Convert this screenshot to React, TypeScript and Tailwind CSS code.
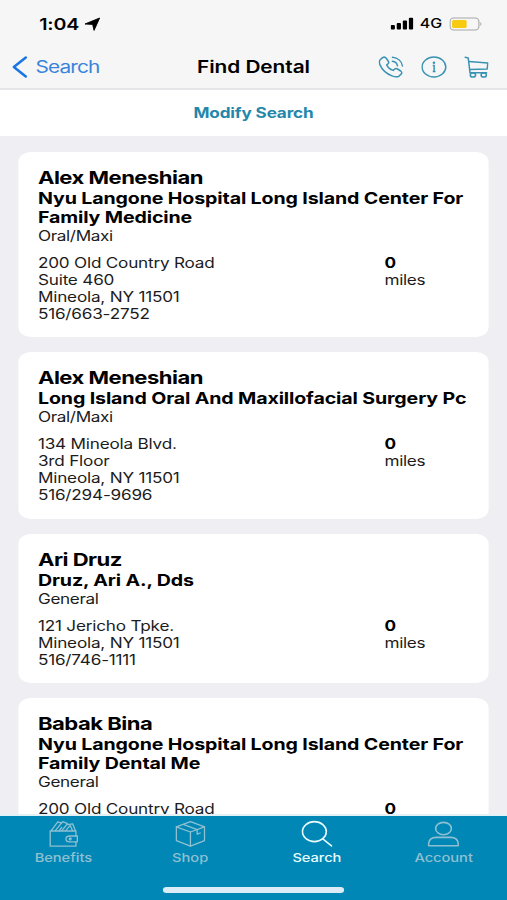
import React from 'react'

type Provider = {
  name: string;
  practice: string[];
  specialty: string;
  address: string[];
}

const providers: Provider[] = [
  {
    name: "Alex Meneshian",
    practice: ["Nyu Langone Hospital Long Island Center For", "Family Medicine"],
    specialty: "Oral/Maxi",
    address: ["200 Old Country Road", "Suite 460", "Mineola, NY 11501", "516/663-2752"],
  },
  {
    name: "Alex Meneshian",
    practice: ["Long Island Oral And Maxillofacial Surgery Pc"],
    specialty: "Oral/Maxi",
    address: ["134 Mineola Blvd.", "3rd Floor", "Mineola, NY 11501", "516/294-9696"],
  },
  {
    name: "Ari Druz",
    practice: ["Druz, Ari A., Dds"],
    specialty: "General",
    address: ["121 Jericho Tpke.", "Mineola, NY 11501", "516/746-1111"],
  },
  {
    name: "Babak Bina",
    practice: ["Nyu Langone Hospital Long Island Center For", "Family Dental Me"],
    specialty: "General",
    address: ["200 Old Country Road"],
  },
];

function StatusBar() {
  return (
    <div className="flex h-[47px] items-center pl-[32px] pr-[20px]">
      <span className="text-[16px] font-semibold tracking-[-0.1px]">1:04</span>
      <svg className="ml-[4px] h-[14px] w-[13px]" viewBox="0 0 16 14" preserveAspectRatio="none">
        <path d="M15.2 1 L0.5 7 L8.2 7.4 L9.6 13.4 Z" fill="#000" stroke="#000" strokeWidth="0.9" strokeLinejoin="round" />
      </svg>
      <svg className="ml-auto h-[13px] w-[19px]" viewBox="0 0 23 13" preserveAspectRatio="none">
        <rect x="0" y="8" width="4.2" height="4.5" rx="1" />
        <rect x="6" y="6" width="4.2" height="6.5" rx="1" />
        <rect x="12" y="3.4" width="4.2" height="9.1" rx="1" />
        <rect x="18" y="0.8" width="4.2" height="11.7" rx="1" />
      </svg>
      <span className="ml-[5px] text-[13px] font-medium">4G</span>
      <svg className="ml-[6px] h-[14px] w-[27px]" viewBox="0 0 33 14" preserveAspectRatio="none">
        <rect x="0.6" y="1" width="28.8" height="12" rx="3.6" fill="none" stroke="#a5a5a5" strokeWidth="1.1" />
        <rect x="2.6" y="3" width="14.6" height="8" rx="1.6" fill="#f8cb12" />
        <path d="M30.8 5 Q33 7 30.8 9 Z" fill="#a5a5a5" />
      </svg>
    </div>
  )
}

function NavBar() {
  return (
    <div className="flex h-[41px] items-center">
      <div className="flex w-[130px] items-center pl-[10px]">
        <svg className="mb-[2px] h-[22px] w-[13px]" viewBox="0 0 16 22" preserveAspectRatio="none">
          <path d="M13.6 1.6 L1.6 11 L13.6 20.4" fill="none" stroke="#1b75e4" strokeWidth="2.6" strokeLinecap="round" strokeLinejoin="round" />
        </svg>
        <span className="ml-[6px] text-[17px] tracking-[-0.7px] text-[#3a84dc]">Search</span>
      </div>
      <span className="flex-1 text-center text-[17px] font-semibold tracking-[-0.05px]">Find Dental</span>
      <div className="flex w-[130px] items-center justify-end gap-[14px] pb-[2px] pr-[15px]">
        <svg className="h-[22px] w-[21px]" viewBox="0 0 26 22" preserveAspectRatio="none" fill="none" stroke="#3a93b3" strokeWidth="1.5" strokeLinecap="round" strokeLinejoin="round">
          <path d="M4.2 1.7 C5.6 0.8 7 1.1 7.9 2.3 L10 5.3 C10.7 6.3 10.4 7.3 9.5 8 L8.4 8.9 C9.4 11.2 12.1 13.6 15 14.4 L16.2 13.3 C17.1 12.5 18.3 12.4 19.3 13 L22.5 15 C23.8 15.9 24 17.1 22.9 18.1 L21.2 19.8 C19.4 21.3 16.7 21.1 13.7 19.9 C8.3 17.7 3.4 13.2 1.6 8.9 C0.6 6.3 0.9 4.1 2.4 3.1 Z" />
          <path d="M14 5.2 C16.8 5.5 18.9 7.2 19.3 9.8" />
          <path d="M14.2 1.3 C19.5 1.8 23.6 5.2 24.3 10" />
        </svg>
        <svg className="h-[22px] w-[21px]" viewBox="0 0 26 22" preserveAspectRatio="none">
          <ellipse cx="12.8" cy="11" rx="12" ry="9.9" fill="none" stroke="#3a93b3" strokeWidth="1.5" />
          <circle cx="12.8" cy="6.7" r="1.3" fill="#3a93b3" />
          <path d="M11.6 9.6 H13 V15.6 M11.6 15.6 H14.4" fill="none" stroke="#3a93b3" strokeWidth="1.5" />
        </svg>
        <svg className="h-[22px] w-[20px]" viewBox="0 0 24 22" preserveAspectRatio="none" fill="none" stroke="#3a93b3" strokeWidth="1.5" strokeLinecap="round" strokeLinejoin="round">
          <path d="M1 1.2 L4 2 L5.8 16.8 H22" />
          <path d="M4.6 5.4 L23.2 7 L22.6 13 L5.4 13.6" />
          <ellipse cx="8.6" cy="19" rx="2.6" ry="2.1" />
          <ellipse cx="19.2" cy="19" rx="2.6" ry="2.1" />
        </svg>
      </div>
    </div>
  )
}

function ProviderCard({ provider }: { provider: Provider }) {
  return (
    <div className="shrink-0 rounded-[10px] bg-white px-[16px] pb-[15px] pt-[15px]">
      <h2 className="text-[18px] font-bold leading-[21.8px] tracking-[-0.42px]">{provider.name}</h2>
      {provider.practice.map((line) => (
        <p key={line} className="whitespace-nowrap text-[16px] font-bold leading-[19px] tracking-[-0.1px]">{line}</p>
      ))}
      <p className="text-[14px] leading-[17.5px] tracking-[-0.3px] text-[#1c1c1c]">{provider.specialty}</p>
      <div className="mt-[9.6px] flex text-[14px] leading-[17.1px] text-[#1c1c1c]">
        <div className="w-[283px] tracking-[-0.17px]">
          {provider.address.map((line) => (
            <p key={line}>{line}</p>
          ))}
        </div>
        <div className="tracking-[-0.3px]">
          <p className="font-bold text-black">0</p>
          <p>miles</p>
        </div>
      </div>
    </div>
  )
}

function WalletIcon() {
  return (
    <svg className="h-[28px] w-[25px]" viewBox="0 0 30 28" preserveAspectRatio="none" fill="none" stroke="currentColor" strokeWidth="1.3" strokeLinejoin="round" strokeLinecap="round">
      <path d="M27.6 16 V11 H2.4 V26.2 H27.6 V21.8" />
      <path d="M29 16 H21.6 C19.2 16 17.8 17.3 17.8 18.9 C17.8 20.5 19.2 21.8 21.6 21.8 H29 Z" />
      <circle cx="22" cy="18.9" r="0.9" />
      <path d="M3.4 10.6 L9.8 1.8 L13.6 3.2 M7.4 10.6 L14.6 1.6 L19.4 3.6 L13.8 10.6" />
      <path d="M11.2 10.6 L13.6 7.4 M19.6 4.6 L24.4 3.8 L27 10.6 M17.6 10.6 L22 5.4 L24.2 10.6" />
    </svg>
  )
}

function BoxIcon() {
  return (
    <svg className="h-[28px] w-[25px]" viewBox="0 0 30 28" preserveAspectRatio="none" fill="none" stroke="currentColor" strokeWidth="1.3" strokeLinejoin="round" strokeLinecap="round">
      <path d="M15 1.6 L28.8 6.8 V20.6 L15 26.2 L1.2 20.6 V6.8 Z" />
      <path d="M1.2 6.8 L15 12 L28.8 6.8 M15 12 V26.2" />
      <path d="M8 4.3 L21.6 9.6 V14.2 L24.6 13" />
    </svg>
  )
}

function SearchIcon() {
  return (
    <svg className="h-[28px] w-[26px]" viewBox="0 0 32 28" preserveAspectRatio="none" fill="none" stroke="currentColor" strokeWidth="1.6" strokeLinecap="round">
      <ellipse cx="13.2" cy="11.6" rx="12" ry="10" />
      <path d="M21.6 18.8 L30.4 25.8" />
    </svg>
  )
}

function AccountIcon() {
  return (
    <svg className="h-[28px] w-[26px]" viewBox="0 0 32 28" preserveAspectRatio="none" fill="none" stroke="currentColor" strokeWidth="1.6" strokeLinejoin="round">
      <ellipse cx="16.2" cy="8.6" rx="7.9" ry="6.2" />
      <path d="M1.2 25.8 V23.4 C1.8 18.8 5 17.4 9 17.4 H23.4 C27.4 17.4 30.4 18.8 31 23.4 V25.8 Z" />
    </svg>
  )
}

const tabs = [
  { label: "Benefits", icon: <WalletIcon />, active: false },
  { label: "Shop", icon: <BoxIcon />, active: false },
  { label: "Search", icon: <SearchIcon />, active: true },
  { label: "Account", icon: <AccountIcon />, active: false },
];

function TabBar() {
  return (
    <nav className="flex h-[86px] shrink-0 flex-col items-center border-t-2 border-[#e3f1f6] bg-[#0087b5]">
      <div className="grid w-full grid-cols-4 pt-[4px]">
        {tabs.map((tab) => (
          <div
            key={tab.label}
            className={tab.active ? "flex flex-col items-center text-[#e9fbff]" : "flex flex-col items-center text-[#8fc0d2]"}
          >
            {tab.icon}
            <span className="mt-px text-[12px] font-medium leading-[18px] tracking-[-0.05px]">{tab.label}</span>
          </div>
        ))}
      </div>
      <div className="mb-[7px] mt-auto h-[6px] w-[148px] rounded-full bg-[#dcecf6]" />
    </nav>
  )
}

export default function App() {
  return (
    <div className="h-[900px] w-[507px] overflow-hidden">
      {/* 414pt wide layout, widened to fill the window */}
      <div className="flex h-[900px] w-[414px] origin-top-left scale-x-[1.22464] flex-col bg-[#eeeef3] font-['Inter','Liberation_Sans',sans-serif] text-black">
        <header className="shrink-0 border-b-2 border-[#e6e6e8] bg-[#f6f6f6]">
          <StatusBar />
          <NavBar />
        </header>
        <div className="flex h-[46px] shrink-0 items-center justify-center bg-white pb-px text-[14px] font-bold tracking-[-0.12px] text-[#2487aa]">
          Modify Search
        </div>
        <main className="flex min-h-0 flex-1 flex-col gap-[15.2px] overflow-hidden px-[15px] pt-[15.8px]">
          {providers.map((provider, i) => (
            <ProviderCard key={i} provider={provider} />
          ))}
        </main>
        <TabBar />
      </div>
    </div>
  )
}
